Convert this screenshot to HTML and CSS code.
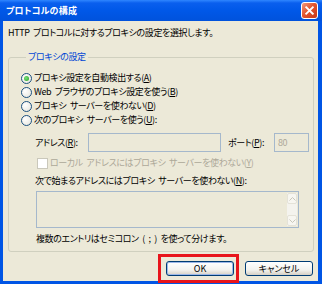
FILE: index.html
```html
<!DOCTYPE html>
<html>
<head>
    <meta charset="UTF-8">
    <title>プロトコルの構成</title>
    <link rel="stylesheet" href="styles.css">
</head>
<body>
    <div class="window">
        <div class="titlebar">
            <span class="title">プロトコルの構成</span>
            <span class="close">
                <svg width="16" height="16" viewBox="0 0 16 16">
                    <path d="M4.5 4.5 L11.5 11.5 M11.5 4.5 L4.5 11.5" stroke="#FFFFFF" stroke-width="2" stroke-linecap="square"/>
                </svg>
            </span>
        </div>
        <div class="client">
            <p class="intro">HTTP プロトコルに対するプロキシの設定を選択します。</p>
            <fieldset class="group">
                <legend>プロキシの設定</legend>
                <div class="radio-row"><span class="radio checked"></span>プロキシ設定を自動検出する(<u>A</u>)</div>
                <div class="radio-row"><span class="radio"></span>Web ブラウザのプロキシ設定を使う(<u>B</u>)</div>
                <div class="radio-row"><span class="radio"></span>プロキシ サーバーを使わない(<u>D</u>)</div>
                <div class="radio-row"><span class="radio"></span>次のプロキシ サーバーを使う(<u>U</u>):</div>

                <div class="addr-row">
                    <span class="addr-label">アドレス(<u>R</u>):</span>
                    <span class="field addr-field"></span>
                    <span class="port-label">ポート(<u>P</u>):</span>
                    <span class="field port-field">80</span>
                </div>

                <div class="check-row"><span class="checkbox"></span>ローカル アドレスにはプロキシ サーバーを使わない(<u>Y</u>)</div>

                <div class="exc-label">次で始まるアドレスにはプロキシ サーバーを使わない(<u>N</u>):</div>
                <div class="exc-box">
                    <div class="scrollbar">
                        <span class="arrow">
                            <svg width="7" height="4" viewBox="0 0 7 4"><path d="M0.5 3.5 L3.5 0.5 L6.5 3.5" fill="none" stroke="#C9C7BA" stroke-width="1"/></svg>
                        </span>
                        <span class="arrow">
                            <svg width="7" height="4" viewBox="0 0 7 4"><path d="M0.5 0.5 L3.5 3.5 L6.5 0.5" fill="none" stroke="#C9C7BA" stroke-width="1"/></svg>
                        </span>
                    </div>
                </div>
                <p class="note">複数のエントリはセミコロン ( ; ) を使って分けます。</p>
            </fieldset>
            <div class="buttons">
                <button type="button" class="btn btn-ok">OK</button>
                <button type="button" class="btn">キャンセル</button>
            </div>
        </div>
    </div>
</body>
</html>
```

FILE: styles.css
```css
body {
    margin: 0;
    background-color: #ECE9D8;
    font-family: "Noto Sans CJK JP", "Noto Sans", sans-serif;
    font-size: 9px;
    letter-spacing: -0.4px;
    word-spacing: 2px;
    font-feature-settings: "palt";
    color: #000000;
    white-space: nowrap;
}
.window {
    width: 322px;
    height: 284px;
    box-sizing: border-box;
    background-color: #0055E5;
    padding: 0 4px 3px 3px;
    display: flex;
    flex-direction: column;
}
.titlebar {
    height: 21px;
    margin: 0 -4px 0 -3px;
    padding: 0 4px 0 6px;
    background: linear-gradient(#2F86FF 0, #0A5FEE 3px, #0058E8 50%, #0052DC 100%);
    display: flex;
    align-items: center;
    justify-content: space-between;
}
.title {
    color: #FFFFFF;
    font-weight: bold;
    font-size: 9px;
    letter-spacing: 0.2px;
    line-height: 14px;
}
.close {
    width: 15px;
    height: 15px;
    border: 1px solid #FFFFFF;
    border-radius: 3px;
    background: linear-gradient(135deg, #F09A7F 0, #E2552F 45%, #C8391A 100%);
    display: flex;
    align-items: center;
    justify-content: center;
}
.close svg {
    width: 15px;
    height: 15px;
}
.client {
    flex: 1;
    background-color: #ECE9D8;
    padding: 5px 4px 0 5px;
}
.intro {
    margin: 0;
    line-height: 14px;
}
.group {
    margin: 10px 0 0 0;
    padding: 7px 0 5px 12px;
    border: 1px solid #D0D0BF;
    border-radius: 3px;
    min-width: 0;
}
.group legend {
    color: #0046D5;
    line-height: 14px;
    padding: 0 2px;
    margin-left: 5px;
}
.radio-row {
    height: 14px;
    line-height: 14px;
    display: flex;
    align-items: center;
}
.radio {
    width: 9px;
    height: 9px;
    border: 1px solid #1C5180;
    border-radius: 50%;
    background: radial-gradient(circle at 35% 35%, #FFFFFF 0, #E4E3DA 100%);
    margin-right: 2px;
    flex-shrink: 0;
    position: relative;
}
.radio.checked::after {
    content: "";
    position: absolute;
    left: 2px;
    top: 2px;
    width: 5px;
    height: 5px;
    border-radius: 50%;
    background: radial-gradient(circle at 40% 40%, #7BE07B 0, #21A121 100%);
}
.addr-row {
    margin: 6px 0 0 14px;
    height: 19px;
    display: flex;
    align-items: center;
}
.field {
    height: 19px;
    box-sizing: border-box;
    border: 1px solid #A5B8CC;
    background-color: #ECE9D8;
    color: #ACA899;
    line-height: 17px;
    padding-left: 3px;
}
.addr-label {
    width: 53px;
}
.addr-field {
    width: 133px;
}
.port-label {
    margin-left: 7px;
    width: 46px;
}
.port-field {
    width: 35px;
}
.check-row {
    margin: 4px 0 0 16px;
    height: 14px;
    line-height: 14px;
    color: #ACA899;
    display: flex;
    align-items: center;
}
.checkbox {
    width: 9px;
    height: 9px;
    border: 1px solid #CAC8BB;
    background-color: #FFFFFF;
    margin-right: 2px;
}
.exc-label {
    margin: 4px 0 0 14px;
    line-height: 14px;
}
.exc-box {
    margin: 3px 0 0 15px;
    width: 263px;
    height: 37px;
    box-sizing: border-box;
    border: 1px solid #A5B8CC;
    display: flex;
    justify-content: flex-end;
    padding: 1px;
}
.scrollbar {
    width: 10px;
    display: flex;
    flex-direction: column;
    justify-content: space-between;
    background-color: #F4F3EE;
}
.arrow {
    height: 11px;
    box-sizing: border-box;
    border: 1px solid #E4E2D8;
    border-radius: 2px;
    background-color: #F7F6F1;
    display: flex;
    align-items: center;
    justify-content: center;
}
.note {
    margin: 4px 0 0 15px;
    line-height: 14px;
}
.buttons {
    margin-top: 9px;
    display: flex;
    justify-content: flex-end;
    gap: 11px;
    padding-right: 1px;
}
.btn {
    width: 68px;
    height: 15px;
    padding: 0;
    border: 1px solid #003C74;
    border-radius: 3px;
    background: linear-gradient(#FFFFFF 0, #F3F3EF 60%, #D6D0C5 100%);
    font-family: inherit;
    font-size: 9px;
    letter-spacing: 0;
    font-feature-settings: "palt";
    line-height: 13px;
    color: #000000;
}
.btn-ok {
    position: relative;
    box-shadow: inset 0 0 0 1px #9DB8E8;
}
.btn-ok::after {
    content: "";
    position: absolute;
    left: -9px;
    right: -6px;
    top: -8px;
    bottom: -8px;
    border: 3px solid #E8141B;
}
```
